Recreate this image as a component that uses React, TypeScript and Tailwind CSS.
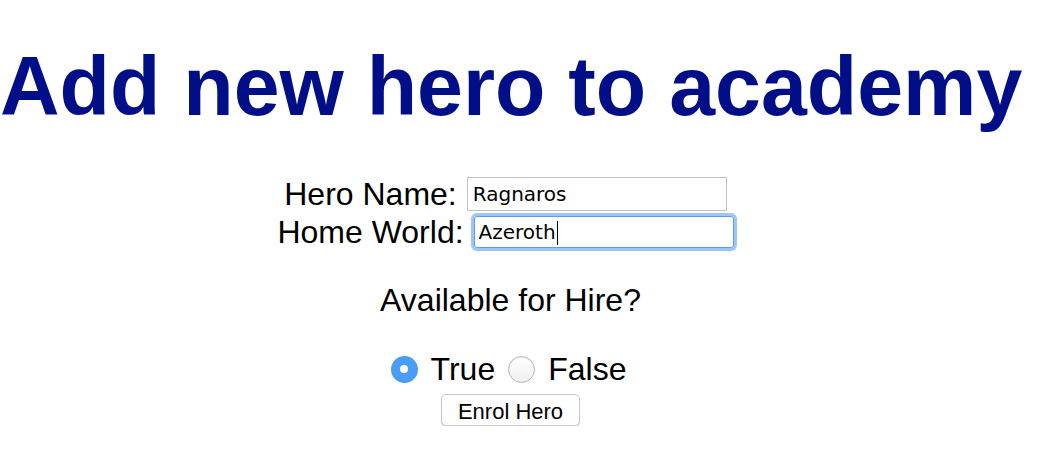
export default function App() {
  return (
    <div className="w-[1021px] bg-white text-black" style={{ fontFamily: '"Liberation Sans", Arial, sans-serif' }}>
      <h1 className="whitespace-nowrap pt-[36px] text-center text-[82.5px] font-bold leading-[100px] text-[#000f88]">
        Add new hero to academy
      </h1>
      <form className="mt-[41px] flex flex-col items-center">
        <div className="mr-[10px] flex items-center gap-[10px]">
          <label className="text-[32px] leading-[34px]">Hero Name:</label>
          <input
            defaultValue="Ragnaros"
            className="h-[34px] w-[260px] border border-[#c2c2c2] px-[5px] text-[20px] outline-none"
            style={{ fontFamily: '"DejaVu Sans", sans-serif' }}
          />
        </div>
        <div className="mr-[10px] mt-[4px] flex items-center gap-[10px]">
          <label className="text-[32px] leading-[34px]">Home World:</label>
          <div className="relative">
            <input
              defaultValue="Azeroth"
              className="block h-[32px] w-[260px] rounded-[3px] border border-[#5b9bea] px-[4px] text-[20px] outline-none ring-[3px] ring-[#9cc6f8]"
              style={{ fontFamily: '"DejaVu Sans", sans-serif' }}
            />
            <span className="absolute left-[83px] top-[5px] h-[24px] w-[1px] bg-black" />
          </div>
        </div>
        <p className="mt-[34px] text-[32px] leading-[34px]">Available for Hire?</p>
        <div className="mr-[4px] mt-[34px] flex items-center gap-[13px] text-[32px] leading-[36px]">
          <span className="flex h-[27px] w-[27px] items-center justify-center rounded-full bg-[#4a9df5]">
            <span className="h-[8px] w-[8px] rounded-full bg-white" />
          </span>
          <span>True</span>
          <span className="h-[27px] w-[27px] rounded-full border border-[#b5b5b5] bg-gradient-to-b from-white to-[#efefef] shadow-[inset_0_1px_1px_rgba(0,0,0,0.08)]" />
          <span>False</span>
        </div>
        <button
          type="button"
          className="mt-[7px] h-[32px] w-[139px] rounded-[5px] border border-[#c8c8c8] bg-white text-[22px] shadow-[0_1px_1px_rgba(0,0,0,0.15)]"
        >
          Enrol Hero
        </button>
      </form>
    </div>
  );
}
